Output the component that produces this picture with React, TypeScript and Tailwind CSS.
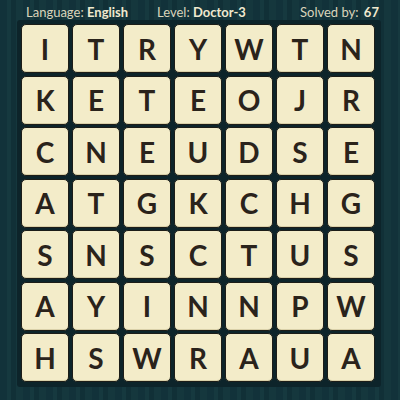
const rows = [
  "ITRYWTN",
  "KETEOJR",
  "CNEUDSE",
  "ATGKCHG",
  "SNSCTUS",
  "AYINNPW",
  "HSWRAUA",
];

export default function App() {
  return (
    <div className="w-[400px] h-[400px] overflow-hidden bg-[repeating-linear-gradient(90deg,#12323a_0px,#12323a_7px,#16393f_7px,#16393f_11px,#113037_11px,#113037_16px,#15373d_16px,#15373d_23px)] font-['Lato','Liberation_Sans',sans-serif]">
      <div className="h-[20px] flex items-center text-[13px] text-[#d9d4bb] leading-none pt-[4px]">
        <div className="pl-[26px] w-[157px]">
          Language: <span className="font-bold text-[#efe9cf]">English</span>
        </div>
        <div className="w-[143px]">
          Level: <span className="font-bold text-[#efe9cf]">Doctor-3</span>
        </div>
        <div>
          Solved by: <span className="font-bold text-[#efe9cf] pl-[2px]">67</span>
        </div>
      </div>
      <div className="ml-[17px] mt-[0px] w-[364px] h-[367px] bg-[#0d242a] rounded-[3px] pt-[4px] pl-[4px]">
        <div className="grid grid-cols-[repeat(7,48px)] grid-rows-[repeat(7,49px)] gap-x-[3px] gap-y-[2.5px]">
          {rows.flatMap((row, r) =>
            row.split("").map((ch, c) => (
              <div
                key={r + "-" + c}
                className="flex items-center justify-center bg-[#f3ecc9] rounded-[5px] border border-[#1c1d18] shadow-[inset_0_-1px_0_#d9d0a8] text-[28px] font-bold text-[#2a231b] leading-none"
              >
                {ch}
              </div>
            ))
          )}
        </div>
      </div>
    </div>
  );
}
